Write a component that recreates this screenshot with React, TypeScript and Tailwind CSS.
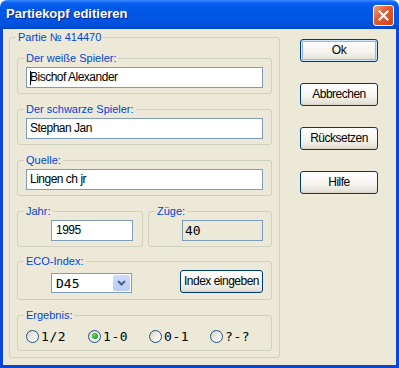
import React from 'react';

const narrow = "font-['Liberation_Sans',Arial,sans-serif] text-[12px] leading-[15px] tracking-[-0.5px] text-black whitespace-nowrap";
const mono = "font-['DejaVu_Sans_Mono','Liberation_Mono',monospace] text-[13px] leading-[15px] text-black";

function Group({ label, className = '', children }: { label: string; className?: string; children?: React.ReactNode }) {
  return (
    <fieldset className={`min-w-0 rounded-[3px] border border-[#d0d0bf] ${className}`}>
      <legend className="ml-[6px] px-[2px] font-['Liberation_Sans',Arial,sans-serif] text-[11px] leading-[13px] text-[#0046d5]">
        {label}
      </legend>
      {children}
    </fieldset>
  );
}

function TextBox({ value, caret = false }: { value: string; caret?: boolean }) {
  return (
    <div className={`mx-[8px] mt-[2px] mb-[5px] flex h-[21px] items-center border border-[#7f9db9] bg-white pl-[3px] ${narrow}`}>
      {caret && <span className="mr-[-1px] inline-block h-[14px] w-px bg-black" />}
      <span>{value}</span>
    </div>
  );
}

function XpButton({ label, isDefault = false, className = '' }: { label: string; isDefault?: boolean; className?: string }) {
  return (
    <button
      className={`flex h-[23px] items-center justify-center rounded-[3px] border border-[#003c74] bg-[linear-gradient(180deg,#ffffff_0%,#f5f4ef_55%,#e6e3d8_90%,#d6d0c5_100%)] ${
        isDefault ? 'shadow-[inset_0_0_0_1px_#cee7ff,inset_0_0_0_2px_#98b4ea]' : ''
      } ${narrow} ${className}`}
    >
      {label}
    </button>
  );
}

function Radio({ label, checked = false, className = '' }: { label: string; checked?: boolean; className?: string }) {
  return (
    <div className={`flex items-center gap-[2px] ${className}`}>
      <span className="flex h-[13px] w-[13px] items-center justify-center rounded-full border border-[#1c5180] bg-[linear-gradient(135deg,#d6d3bf_0%,#f4f3ee_60%,#ffffff_100%)]">
        {checked && <span className="h-[6px] w-[6px] rounded-full bg-[radial-gradient(circle_at_35%_35%,#62d95c_0%,#21a121_70%)]" />}
      </span>
      <span className={`${mono} tracking-[0.6px]`}>{label}</span>
    </div>
  );
}

export default function App() {
  return (
    <div className="h-[368px] w-[399px] bg-white">
      <div className="flex h-full w-full flex-col">
        {/* Title bar */}
        <div className="flex h-[29px] items-start rounded-t-[7px] bg-[linear-gradient(180deg,#3a8dff_0px,#0a5fef_3px,#0058e6_9px,#0055e3_20px,#004fd8_26px,#0046c8_29px)] pl-[6px] pr-[5px]">
          <span className="mt-[6px] font-['Liberation_Sans',Arial,sans-serif] text-[13px] font-bold leading-[15px] text-white [text-shadow:1px_1px_0_#0a1e8c]">
            Partiekopf editieren
          </span>
          <button className="ml-auto mt-[5px] flex h-[21px] w-[21px] items-center justify-center rounded-[3px] border border-white bg-[linear-gradient(135deg,#f2a283_0%,#e35d34_40%,#c8421b_100%)]">
            <svg width="11" height="11" viewBox="0 0 11 11">
              <path d="M1.5 1.5 L9.5 9.5 M9.5 1.5 L1.5 9.5" stroke="#fff" strokeWidth="2.2" strokeLinecap="square" />
            </svg>
          </button>
        </div>

        {/* Client area */}
        <div className="flex flex-1 border-x-[3px] border-b-[3px] border-[#0a47d8] bg-[#ece9d8] pl-[6px] pt-[2px]">
          <Group label="Partie № 414470" className="h-[327px] w-[271px]">
            <div className="flex flex-col px-[7px] pt-[8px]">
              <Group label="Der weiße Spieler:">
                <TextBox value="Bischof Alexander" caret />
              </Group>
              <Group label="Der schwarze Spieler:" className="mt-[9px]">
                <TextBox value="Stephan Jan" />
              </Group>
              <Group label="Quelle:" className="mt-[9px]">
                <TextBox value="Lingen ch jr" />
              </Group>

              <div className="mt-[9px] flex gap-[5px]">
                <Group label="Jahr:" className="w-[126px]">
                  <div className="flex justify-end pr-[9px] pt-[2px] pb-[5px]">
                    <div className={`flex h-[21px] w-[82px] items-center border border-[#7f9db9] bg-white pl-[4px] ${narrow}`}>1995</div>
                  </div>
                </Group>
                <Group label="Züge:" className="w-[124px]">
                  <div className="flex justify-end pr-[8px] pt-[2px] pb-[5px]">
                    <div className={`flex h-[21px] w-[81px] items-center border border-[#7f9db9] bg-[#ece9d8] pl-[2px] ${mono}`}>40</div>
                  </div>
                </Group>
              </div>

              <Group label="ECO-Index:" className="mt-[8px]">
                <div className="flex items-end justify-between pl-[33px] pr-[8px] pt-[2px] pb-[6px]">
                  <div className="flex h-[20px] w-[81px] items-center border border-[#7f9db9] bg-white p-px">
                    <span className={`flex-1 pl-[3px] ${mono}`}>D45</span>
                    <span className="flex h-full w-[17px] items-center justify-center rounded-[2px] bg-[linear-gradient(180deg,#cddcfc_0%,#b9cdf8_100%)]">
                      <svg width="9" height="6" viewBox="0 0 9 6">
                        <path d="M1 1 L4.5 4.5 L8 1" fill="none" stroke="#4d6185" strokeWidth="2" />
                      </svg>
                    </span>
                  </div>
                  <XpButton label="Index eingeben" className="w-[83px]" />
                </div>
              </Group>

              <Group label="Ergebnis:" className="mt-[9px]">
                <div className="flex h-[28px] items-center pl-[8px]">
                  <Radio label="1/2" className="w-[62px]" />
                  <Radio label="1-0" checked className="w-[61px]" />
                  <Radio label="0-1" className="w-[61px]" />
                  <Radio label="?-?" className="w-[61px]" />
                </div>
              </Group>
            </div>
          </Group>

          <div className="ml-[20px] flex w-[78px] flex-col gap-[21px] pt-[8px]">
            <XpButton label="Ok" isDefault />
            <XpButton label="Abbrechen" />
            <XpButton label="Rücksetzen" />
            <XpButton label="Hilfe" />
          </div>
        </div>
      </div>
    </div>
  );
}
